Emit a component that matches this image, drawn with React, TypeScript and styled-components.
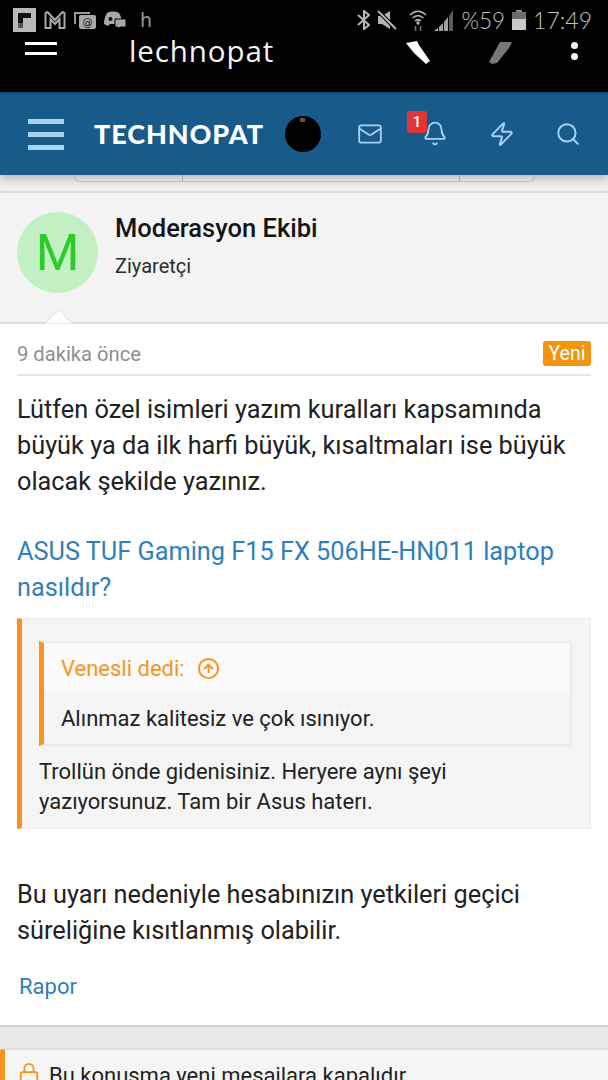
import React from "react";
import styled, { createGlobalStyle } from "styled-components";
import { Bell, CircleArrowUp, Lock, Mail, Search, Zap } from "lucide-react";

const Global = createGlobalStyle`
  html, body { margin: 0; padding: 0; background: #fff; }
  * { box-sizing: border-box; }
  body { font-family: Roboto, "Liberation Sans", sans-serif; }
`;

const Page = styled.div`
  width: 608px;
  height: 1080px;
  overflow: hidden;
  display: flex;
  flex-direction: column;
  background: #fff;
  color: #1f1f1f;
`;

const StatusBar = styled.div`
  height: 40px;
  flex: none;
  background: #000;
  display: flex;
  justify-content: space-between;
  padding: 8px 16px 0 13px;
`;

const StatusGroup = styled.div`
  display: flex;
  align-items: center;
  height: 24px;
  gap: ${(p: { $gap: number }) => p.$gap}px;
  color: #b4b4b4;
`;

const LetterH = styled.span`
  font: 400 19px "DejaVu Sans", sans-serif;
  color: #9a9a9a;
  margin-left: 6px;
`;

const StatusText = styled.span<{ $size: number }>`
  font: 300 ${(p) => p.$size}px Lato, sans-serif;
  color: #c4c4c4;
`;

const BrowserBar = styled.div`
  height: 52px;
  flex: none;
  background: #000;
  display: grid;
  grid-template-columns: 104px 276px 84px 82px 1fr;
  padding: 0 0 0 25px;
  align-items: start;
  color: #fff;
`;

const BrowserMenu = styled.div`
  width: 32px;
  height: 13px;
  margin-top: 2px;
  border-top: 3px solid #fff;
  border-bottom: 3px solid #fff;
`;

const BrowserTitle = styled.div`
  margin-top: -7px;
  font: 400 29.5px "Open Sans", sans-serif;
  letter-spacing: 0.9px;
  white-space: nowrap;
  line-height: 36px;
  color: #f4f4f4;
`;

const Dots = styled.div`
  display: flex;
  flex-direction: column;
  gap: 4px;
  margin: 2px 0 0 0;
`;

const Dot = styled.span`
  width: 7px;
  height: 7px;
  border-radius: 50%;
  background: #f4f4f4;
`;

const Nav = styled.nav`
  height: 83px;
  flex: none;
  background: #185a8a;
  box-shadow: 0 3px 10px rgba(0, 0, 0, 0.28), inset 0 3px 3px -2px rgba(0, 0, 0, 0.25);
  display: flex;
  align-items: center;
  padding-left: 28px;
  position: relative;
  z-index: 2;
  color: #a9d3f0;
`;

const NavMenu = styled.div`
  width: 36px;
  height: 31px;
  display: flex;
  flex-direction: column;
  justify-content: space-between;
  margin-top: 1px;
`;

const NavBar = styled.span`
  height: 5px;
  background: #a9d3f0;
`;

const Logo = styled.div`
  margin-left: 30px;
  width: 191px;
  font: 900 27px Lato, sans-serif;
  color: #fff;
  letter-spacing: 0.9px;
  white-space: nowrap;
`;

const NavAvatar = styled.div`
  width: 36px;
  height: 36px;
  border-radius: 50%;
  background: #000;
  flex: none;
  position: relative;
  &::after {
    content: "";
    position: absolute;
    left: 15px;
    top: 2px;
    width: 5px;
    height: 4px;
    background: #555;
  }
`;

const NavIcon = styled.div`
  position: relative;
  flex: none;
  width: 26px;
  display: flex;
  justify-content: center;
  margin-left: ${(p: { $left: number }) => p.$left}px;
`;

const Badge = styled.span`
  position: absolute;
  left: -15px;
  top: -8px;
  width: 20px;
  height: 22px;
  border-radius: 3px;
  background: #e3343a;
  color: #fff;
  font: 500 15px Roboto, sans-serif;
  display: flex;
  align-items: center;
  justify-content: center;
`;

const PagerStrip = styled.div`
  height: 18px;
  flex: none;
  background: #f0f0f0;
  border-bottom: 2px solid #dfdfdf;
  padding-left: 74px;
`;

const Pager = styled.div`
  width: 461px;
  height: 7px;
  display: grid;
  grid-template-columns: 107px 277px 1fr;
  border: 1px solid #cfcfcf;
  border-top: 0;
  border-radius: 0 0 6px 6px;
  background: #f4f4f4;
`;

const PagerCell = styled.span`
  border-left: ${(p: { $first?: boolean }) => (p.$first ? "0" : "1px solid #c4c4c4")};
`;

const UserHead = styled.header`
  height: 131px;
  flex: none;
  background: #f4f4f4;
  border-bottom: 2px solid #dcdcdc;
  display: flex;
  padding: 17px 0 0 17px;
  position: relative;
`;

const Arrow = styled.span`
  position: absolute;
  left: 47.5px;
  bottom: -11.5px;
  width: 21px;
  height: 21px;
  background: #fff;
  border-left: 1px solid #dcdcdc;
  border-top: 1px solid #dcdcdc;
  transform: rotate(45deg);
  clip-path: polygon(0 0, 100% 0, 0 100%);
`;

const Avatar = styled.div`
  width: 81px;
  height: 81px;
  margin-top: 2px;
  border-radius: 50%;
  background: #c2f0c2;
  color: #29cc29;
  font: 400 50px Roboto, sans-serif;
  display: flex;
  align-items: center;
  justify-content: center;
  flex: none;
`;

const UserInfo = styled.div`
  margin-left: 17px;
  display: flex;
  flex-direction: column;
`;

const UserName = styled.div`
  font: 500 25.5px/36px Roboto, sans-serif;
  color: #141414;
`;

const UserRole = styled.div`
  font: 400 20px/26px Roboto, sans-serif;
  color: #2c2c2c;
  margin-top: 7px;
`;

const Post = styled.article`
  flex: none;
  height: 703px;
  padding: 0 17px;
  border-bottom: 2px solid #cfcfcf;
`;

const Meta = styled.div`
  height: 52px;
  display: flex;
  align-items: center;
  justify-content: space-between;
  border-bottom: 2px solid #e7e7e7;
  padding-top: 10px;
  margin-bottom: 16px;
`;

const Time = styled.span`
  font: 400 20.2px Roboto, sans-serif;
  color: #8e8e8e;
`;

const NewTag = styled.span`
  width: 48px;
  height: 25px;
  margin-top: -2px;
  border-radius: 3px;
  background: #f3940f;
  color: #fff;
  font: 400 19.5px Roboto, sans-serif;
  display: flex;
  align-items: center;
  justify-content: center;
`;

const Para = styled.p`
  margin: 0 0 ${(p: { $after: number }) => p.$after}px;
  font: 400 25.3px/36px Roboto, sans-serif;
  color: #222;
`;

const PostLink = styled.a`
  color: #2f7fba;
`;

const Quote = styled.blockquote`
  margin: 0 0 48px;
  height: 211px;
  background: #f5f5f5;
  border: 1px solid #ececec;
  border-left: 5px solid #f7941d;
  padding: 22px 18px 0 17px;
`;

const Inner = styled.div`
  height: 105px;
  border: 2px solid #ececec;
  border-left: 5px solid #f7941d;
  margin-bottom: 11px;
`;

const InnerHead = styled.div`
  height: 50px;
  background: #fafafa;
  display: flex;
  align-items: center;
  gap: 12px;
  padding-left: 17px;
  color: #f7941d;
  font: 400 22px Roboto, sans-serif;
`;

const InnerBody = styled.div`
  height: 51px;
  padding-left: 17px;
  display: flex;
  align-items: center;
  font: 400 22px Roboto, sans-serif;
  color: #222;
`;

const QuoteText = styled.div`
  font: 400 22px/30px Roboto, sans-serif;
  color: #222;
`;

const Report = styled.a`
  display: block;
  margin: 20px 0 0 2px;
  font: 400 22px/36px Roboto, sans-serif;
  color: #2f7fba;
`;

const Gap = styled.div`
  height: 21px;
  flex: none;
  background: #e9e9e9;
`;

const Notice = styled.div`
  flex: 1;
  background: #f5f5f5;
  border-top: 2px solid #dedede;
  border-left: 5px solid #f7941d;
  border-top-left-radius: 4px;
  padding: 12px 0 0 13px;
  display: flex;
  align-items: flex-start;
  gap: 9px;
  color: #f7941d;
`;

const NoticeText = styled.span`
  font: 400 22px/28px Roboto, sans-serif;
  color: #1f1f1f;
  white-space: nowrap;
`;

const Flip = () => (
  <svg width="23" height="24" viewBox="0 0 23 24">
    <rect width="23" height="24" fill="#b9b9b9" />
    <path d="M5 5h13v5h-8v5H5z" fill="#111" />
    <path d="M5 15h5v5H5z" fill="#555" />
  </svg>
);
const MailM = () => (
  <svg width="22" height="18" viewBox="0 0 22 18" fill="none" stroke="#a8a8a8" strokeWidth="2">
    <path d="M1.500 17V2l2-1L11 9l7.500-8 2 1v15h-5V8L11 13 6.500 8v9z" />
  </svg>
);
const AtApp = () => (
  <svg width="22" height="18" viewBox="0 0 22 18">
    <path d="M1 13V2h15" fill="none" stroke="#9a9a9a" strokeWidth="2" />
    <rect x="5" y="4" width="17" height="14" rx="2" fill="#a8a8a8" />
    <text x="13.500" y="15" fontSize="10" fontFamily="DejaVu Sans" textAnchor="middle" fill="#111">@</text>
  </svg>
);
const Discord = () => (
  <svg width="22" height="20" viewBox="0 0 22 20">
    <path d="M3 3c3-2 9-2 12 0 2 3 3 7 3 11l-4 2-1-2H6l-2 2-4-2c0-4 1-8 3-11z" fill="#a8a8a8" />
    <circle cx="6.500" cy="9" r="2" fill="#111" />
    <path d="M11 9h11v8h-6l-2 2v-2h-3z" fill="#a8a8a8" stroke="#000" />
  </svg>
);
const Bt = () => (
  <svg width="13" height="20" viewBox="0 0 13 20" fill="none" stroke="#b4b4b4" strokeWidth="2">
    <path d="M1 5l11 10-5 4V1l5 4L1 15" />
  </svg>
);
const Muted = () => (
  <svg width="25" height="20" viewBox="0 0 25 20">
    <path d="M1 6h4l8-5v18l-8-5H1z" fill="#b4b4b4" />
    <path d="M1 1l18 18" stroke="#000" strokeWidth="4" />
    <path d="M1 1l18 18" stroke="#b4b4b4" strokeWidth="2" />
  </svg>
);
const Wifi = () => (
  <svg width="18" height="21" viewBox="0 0 18 21" fill="none" stroke="#b4b4b4" strokeWidth="1.500">
    <path d="M1 5c5-5 11-5 16 0M3.500 8c3.500-3 7.500-3 11 0M6 11c2-1.500 4-1.500 6 0" />
    <circle cx="9" cy="13" r="1" fill="#b4b4b4" />
    <path d="M6.500 21v-5M11.500 21v-5" stroke="#777" />
  </svg>
);
const Signal = () => (
  <svg width="20" height="21" viewBox="0 0 20 21">
    <path d="M0 21l4-3v3z" fill="#b4b4b4" />
    <path d="M5 17l4-4v8H5zM10 12l4-5v14h-4z" fill="#a0a0a0" />
    <path d="M15 6l4-6v21h-4z" fill="#5c5c5c" />
  </svg>
);
const Battery = () => (
  <svg width="14" height="20" viewBox="0 0 14 20">
    <rect x="4" y="0" width="6" height="2" fill="#8a8a8a" />
    <rect x="0" y="2" width="14" height="18" fill="#6d6d6d" />
    <rect x="0" y="9" width="14" height="11" fill="#c9c9c9" />
  </svg>
);
const Chevron = ({ back }: { back: boolean }) => (
  <svg width="26" height="26" viewBox="0 0 26 26">
    {back ? (
      <path d="M1 3L12 1l2 4L25 21l-4 3L9 13z" fill="#fff" />
    ) : (
      <path d="M0 22L11 2h12l-3 6L8 23l-5 1z" fill="#777" />
    )}
  </svg>
);

export default function App() {
  return (
    <Page>
      <Global />
      <StatusBar>
        <StatusGroup $gap={8}>
          <Flip />
          <MailM />
          <AtApp />
          <Discord />
          <LetterH>h</LetterH>
        </StatusGroup>
        <StatusGroup $gap={7}>
          <Bt />
          <Muted />
          <Wifi />
          <Signal />
          <StatusText $size={22.5}>%59</StatusText>
          <Battery />
          <StatusText $size={23}>17:49</StatusText>
        </StatusGroup>
      </StatusBar>
      <BrowserBar>
        <BrowserMenu />
        <BrowserTitle>lechnopat</BrowserTitle>
        <Chevron back />
        <Chevron back={false} />
        <Dots>
          <Dot />
          <Dot />
        </Dots>
      </BrowserBar>
      <Nav>
        <NavMenu>
          <NavBar />
          <NavBar />
          <NavBar />
        </NavMenu>
        <Logo>TECHNOPAT</Logo>
        <NavAvatar />
        <NavIcon $left={36}>
          <Mail size={30} strokeWidth={1.7} />
        </NavIcon>
        <NavIcon $left={39}>
          <Bell size={29} strokeWidth={1.7} />
          <Badge>1</Badge>
        </NavIcon>
        <NavIcon $left={41}>
          <Zap size={30} strokeWidth={1.8} />
        </NavIcon>
        <NavIcon $left={40}>
          <Search size={32} strokeWidth={1.8} />
        </NavIcon>
      </Nav>
      <PagerStrip>
        <Pager>
          <PagerCell $first />
          <PagerCell />
          <PagerCell />
        </Pager>
      </PagerStrip>
      <UserHead>
        <Avatar>M</Avatar>
        <UserInfo>
          <UserName>Moderasyon Ekibi</UserName>
          <UserRole>Ziyaretçi</UserRole>
        </UserInfo>
        <Arrow />
      </UserHead>
      <Post>
        <Meta>
          <Time>9 dakika önce</Time>
          <NewTag>Yeni</NewTag>
        </Meta>
        <Para $after={34}>
          Lütfen özel isimleri yazım kuralları kapsamında büyük ya da ilk harfi büyük, kısaltmaları ise büyük olacak
          şekilde yazınız.
        </Para>
        <Para $after={12}>
          <PostLink>ASUS TUF Gaming F15 FX 506HE-HN011 laptop nasıldır?</PostLink>
        </Para>
        <Quote>
          <Inner>
            <InnerHead>
              Venesli dedi:
              <CircleArrowUp size={23} strokeWidth={2} />
            </InnerHead>
            <InnerBody>Alınmaz kalitesiz ve çok ısınıyor.</InnerBody>
          </Inner>
          <QuoteText>
            Trollün önde gidenisiniz. Heryere aynı şeyi
            <br />
            yazıyorsunuz. Tam bir Asus haterı.
          </QuoteText>
        </Quote>
        <Para $after={0}>
          Bu uyarı nedeniyle hesabınızın yetkileri geçici süreliğine kısıtlanmış olabilir.
        </Para>
        <Report>Rapor</Report>
      </Post>
      <Gap />
      <Notice>
        <Lock size={22} strokeWidth={2} />
        <NoticeText>Bu konuşma yeni mesajlara kapalıdır</NoticeText>
      </Notice>
    </Page>
  );
}
